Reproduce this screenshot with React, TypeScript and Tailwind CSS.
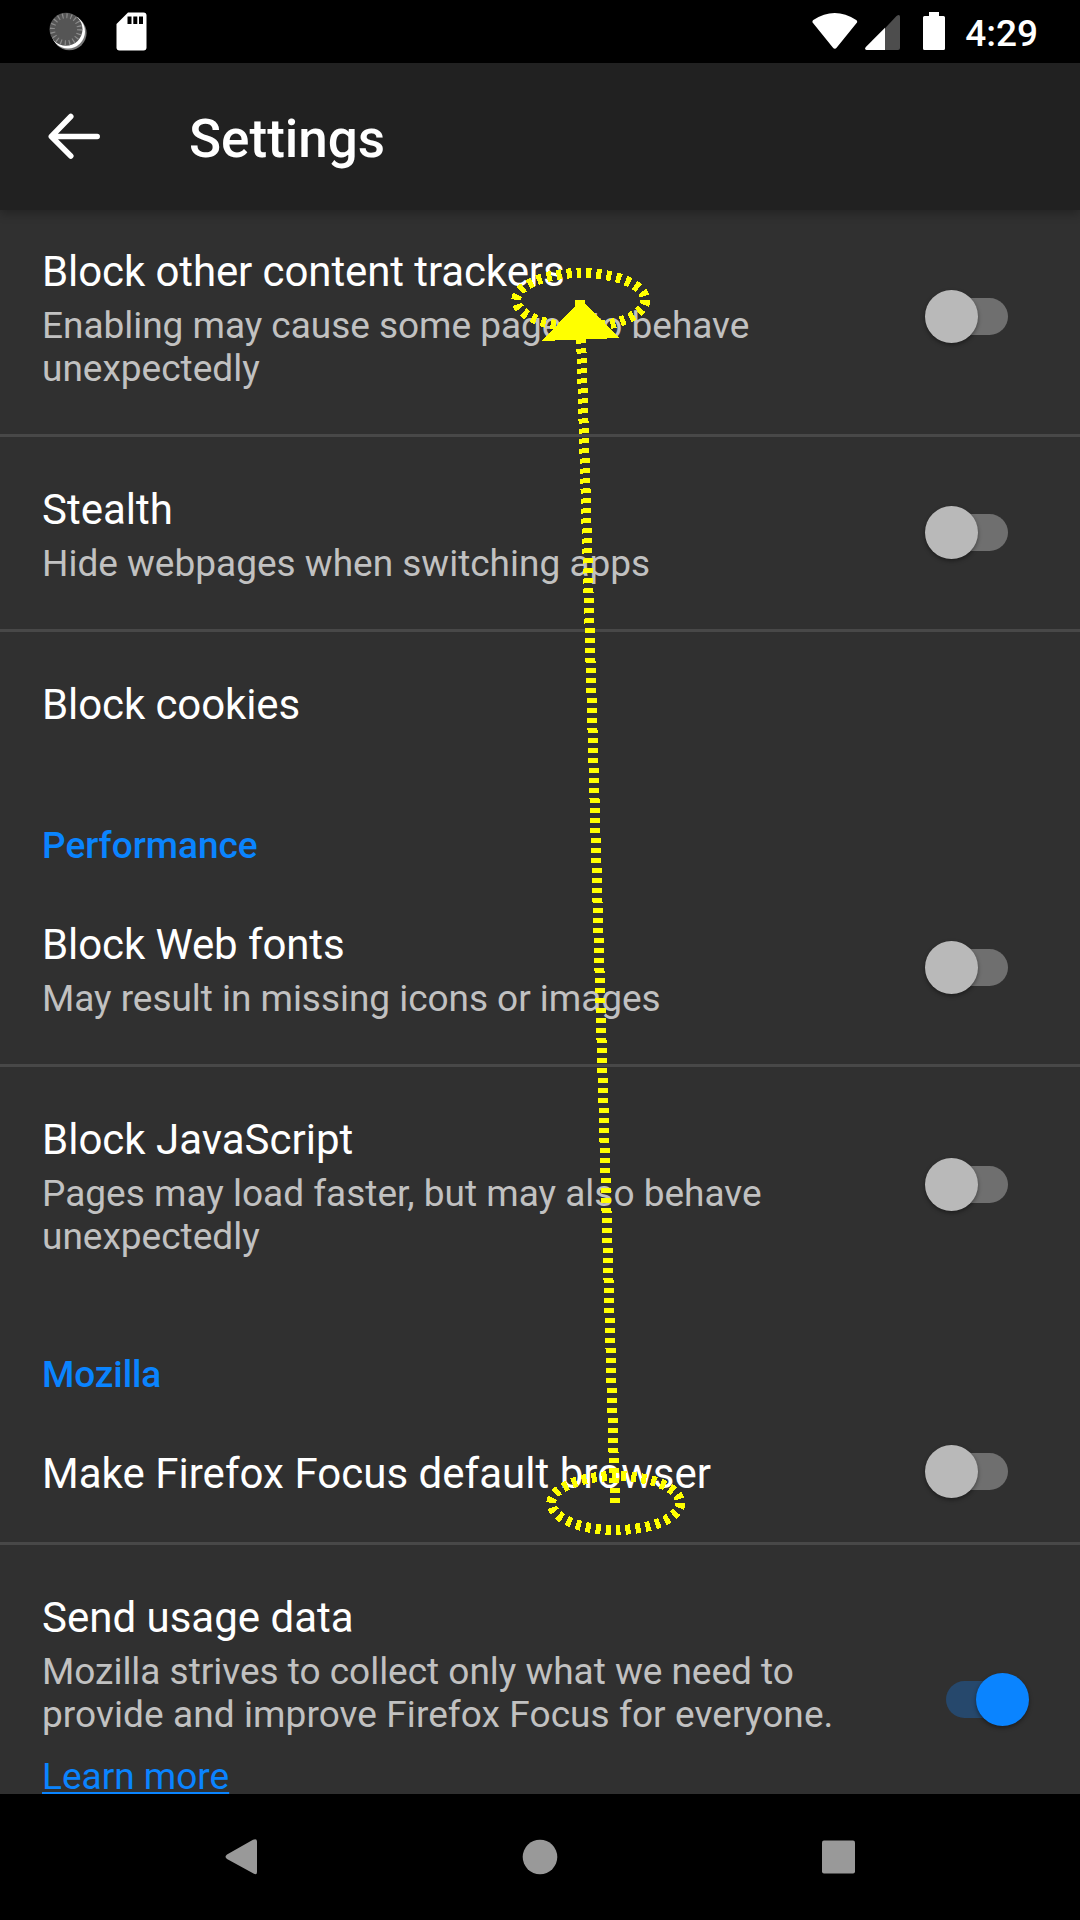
import React from "react";

function Switch({ on = false }: { on?: boolean }) {
  return (
    <span
      className={
        on
          ? "mb-[1px] mr-[55px] flex h-[37px] w-[79px] items-center justify-end rounded-full bg-[#26486c]"
          : "mb-[1px] mr-[72px] flex h-[37px] w-[79px] items-center rounded-full bg-[#6f6f6f]"
      }
    >
      <span
        className={
          on
            ? "-mr-[4px] size-[53px] shrink-0 rounded-full bg-[#0a84ff] shadow-[0_2px_4px_rgba(0,0,0,0.4)]"
            : "-ml-[4px] size-[53px] shrink-0 rounded-full bg-[#b9b9b9] shadow-[0_2px_4px_rgba(0,0,0,0.4)]"
        }
      />
    </span>
  );
}

type Line = { text: string; className?: string };

type RowProps = {
  title: string;
  titleClass?: string;
  lines?: Line[];
  toggle?: "on" | "off";
  link?: string;
  divider?: boolean;
  className?: string;
  padding?: string;
};

function Row({
  title,
  titleClass = "",
  lines,
  toggle,
  link,
  divider,
  className = "",
  padding = "pt-[45px] pb-[44px]",
}: RowProps) {
  return (
    <>
      <div className={"flex shrink-0 items-center justify-between pl-[42px] " + className}>
        <div className={padding}>
          <h3 className={"text-[42px] leading-[56px] whitespace-nowrap " + titleClass}>{title}</h3>
          {lines && (
            <p className="mt-1 text-[37px] leading-[43px] text-[#c1c1c1]">
              {lines.map((l) => (
                <span key={l.text} className={"block whitespace-nowrap " + (l.className ?? "")}>
                  {l.text}
                </span>
              ))}
            </p>
          )}
          {link && (
            <a className="mt-[19px] block w-max text-[37px] leading-[43px] text-[#0a84ff] underline decoration-2 underline-offset-[3px]">
              {link}
            </a>
          )}
        </div>
        {toggle && <Switch on={toggle === "on"} />}
      </div>
      {divider && <hr className="h-[3px] shrink-0 border-0 bg-[#484848]" />}
    </>
  );
}

function Category({ children, className = "" }: { children: string; className?: string }) {
  return (
    <h2 className={"mb-[5px] shrink-0 pl-[42px] text-[37px] leading-[43px] font-medium text-[#0a84ff] " + className}>
      {children}
    </h2>
  );
}

function StatusBar() {
  return (
    <div className="flex h-[63px] shrink-0 items-center bg-black">
      <svg className="ml-[48px]" width="42" height="63" viewBox="0 0 42 63">
        <circle cx="21.3" cy="33" r="17.300" fill="#777" />
        <circle cx="20" cy="31.5" r="17" fill="#fff" />
        <circle cx="18" cy="29.3" r="16.5" fill="#555" />
        <circle cx="18" cy="29.3" r="13.5" fill="none" stroke="#8c8c8c" strokeWidth="5" strokeDasharray="1.2 3.041" />
      </svg>
      <svg className="ml-[26px]" width="31" height="63" viewBox="0 0 31 63">
        <path d="M12 12.5H27.500Q30.500 12.500 30.500 15.500V47.500Q30.500 50.500 27.500 50.500H3.500Q.5 50.500 .5 47.500V24Z" fill="#fff" />
        <path d="M11.500 16.500h4v7.500h-4zM17.300 16.500h4v7.500h-4zM23 16.500h4v7.500h-4z" fill="#000" />
      </svg>
      <svg className="ml-auto" width="46" height="63" viewBox="0 0 46 63">
        <path d="M1.300 20Q22.700 6 44.200 20Q46 21.500 44.600 23L24.800 47.500Q22.800 50 20.800 47.500L1 23Q-.3 21.500 1.300 20Z" fill="#fff" />
      </svg>
      <svg className="ml-[7px]" width="35" height="63" viewBox="0 0 35 63">
        <path d="M20 28.300L31.500 16Q35 13.500 35 17V48Q35 50 33 50H20Z" fill="#4d4d4d" />
        <path d="M20 27.700V50H1.500Q-1 49.500 .8 47Z" fill="#fff" />
      </svg>
      <svg className="ml-[23px]" width="22" height="63" viewBox="0 0 22 63">
        <path d="M6 12h10v4h4.500Q22 16 22 17.500V48.500Q22 50 20.500 50H1.500Q0 50 0 48.500V17.500Q0 16 1.500 16H6Z" fill="#fff" />
      </svg>
      <span className="mt-1 mr-[42px] ml-[20px] text-[37px] leading-[43px] font-medium">4:29</span>
    </div>
  );
}

function NavBar() {
  return (
    <div className="relative z-10 flex h-[126px] shrink-0 items-center justify-between bg-black px-[225px]">
      <svg width="32" height="36" viewBox="0 0 32 36">
        <path d="M28 .8Q32 -.8 32 2.500V33Q32 36.500 28.500 34.500L2 20Q-1 17.800 2 15.500Z" fill="#999" />
      </svg>
      <svg width="36" height="36" viewBox="0 0 36 36">
        <circle cx="18" cy="18" r="17.300" fill="#999" />
      </svg>
      <svg width="33" height="34" viewBox="0 0 33 34">
        <rect x="0" y=".5" width="33" height="33" rx="2" fill="#999" />
      </svg>
    </div>
  );
}

function Gesture() {
  return (
    <svg
      className="pointer-events-none absolute inset-0 z-20"
      width="1080"
      height="1920"
      viewBox="0 0 1080 1920"
      fill="none"
      stroke="#ff0"
      strokeWidth="10"
      shapeRendering="crispEdges"
    >
      <ellipse cx="580.800" cy="300" rx="64.500" ry="27" strokeDasharray="5 5" />
      <ellipse cx="615.800" cy="1503" rx="64.500" ry="27" strokeDasharray="5 5" />
      <path d="M615 1503L580 300" strokeDasharray="5 5" />
      <path d="M575 300H585V304L620 338L542 341L575 306Z" fill="#ff0" stroke="none" />
    </svg>
  );
}

export default function App() {
  return (
    <div className="relative flex h-[1920px] w-[1080px] flex-col overflow-hidden bg-[#303030] font-[Roboto,sans-serif] text-white">
      <StatusBar />
      <header className="relative z-10 flex h-[147px] shrink-0 items-center bg-[#212121] shadow-[0_3px_10px_rgba(0,0,0,0.3)]">
        <svg className="ml-[48px]" width="53" height="47" viewBox="0 0 53 47" fill="none" stroke="#fff" strokeWidth="5.500" strokeLinecap="round" strokeLinejoin="round">
          <path d="M49.200 23.500H4M22.800 3.500L3.300 23.500L22.800 43" />
        </svg>
        <h1 className="mt-[4px] ml-[88px] text-[53px] leading-[62px] font-medium">Settings</h1>
      </header>
      <main className="flex min-h-0 flex-1 flex-col overflow-hidden">
        <Row
          title="Block other content trackers"
          titleClass="tracking-[-0.1px]"
          lines={[{ text: "Enabling may cause some pages to behave", className: "tracking-[-0.03px]" }, { text: "unexpectedly" }]}
          toggle="off"
          divider
          className="-mt-[11px]"
        />
        <Row title="Stealth" lines={[{ text: "Hide webpages when switching apps" }]} toggle="off" divider />
        <Row title="Block cookies" titleClass="tracking-[-0.1px]" padding="pt-[45px] pb-[40px]" />
        <Category className="mt-[51px]">Performance</Category>
        <Row
          title="Block Web fonts"
          titleClass="tracking-[-0.1px]"
          lines={[{ text: "May result in missing icons or images", className: "tracking-[-0.04px]" }]}
          toggle="off"
          divider
        />
        <Row
          title="Block JavaScript"
          lines={[{ text: "Pages may load faster, but may also behave" }, { text: "unexpectedly" }]}
          toggle="off"
        />
        <Category className="mt-[51px] tracking-[-0.1px]">Mozilla</Category>
        <Row
          title="Make Firefox Focus default browser"
          titleClass="tracking-[0.03px]"
          toggle="off"
          divider
          padding="pt-[45px] pb-[40px]"
        />
        <Row
          title="Send usage data"
          lines={[
            { text: "Mozilla strives to collect only what we need to", className: "tracking-[-0.02px]" },
            { text: "provide and improve Firefox Focus for everyone.", className: "tracking-[0.08px]" },
          ]}
          link="Learn more"
          toggle="on"
          padding="pt-[45px] pb-[56px]"
        />
      </main>
      <NavBar />
      <Gesture />
    </div>
  );
}
